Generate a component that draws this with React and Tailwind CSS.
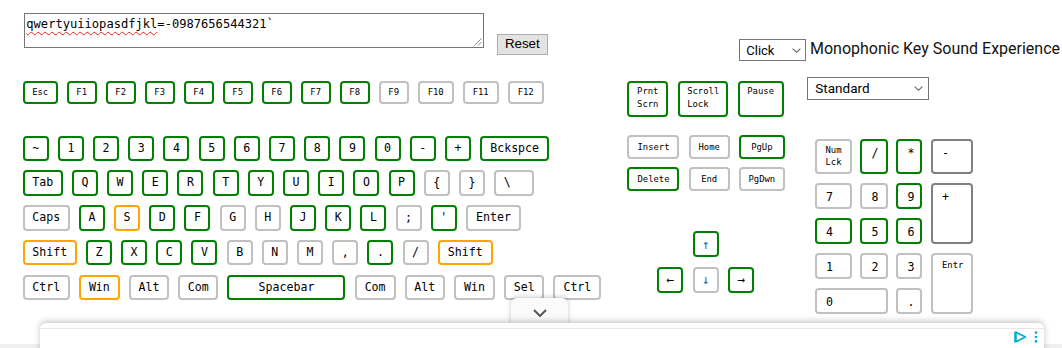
import React from 'react';

const G = 'border-[#008000]';
const O = 'border-[#ffa500]';
const L = 'border-[#c0c0c0]';
const D = 'border-[#808080]';

const fnRow = [
  ['Esc', G, 'w-[35px]'], ['F1', G], ['F2', G], ['F3', G], ['F4', G], ['F5', G], ['F6', G],
  ['F7', G], ['F8', G], ['F9', L], ['F10', L, 'w-[36px]'], ['F11', L, 'w-[36px]'], ['F12', L, 'w-[36px]'],
];

const mainRows = [
  [
    ['~', G], ['1', G], ['2', G], ['3', G], ['4', G], ['5', G], ['6', G], ['7', G], ['8', G],
    ['9', G], ['0', G], ['-', G], ['+', G], ['Bckspce', G, 'w-[69px]'],
  ],
  [
    ['Tab', G, 'w-[40px]'], ['Q', G], ['W', G], ['E', G], ['R', G], ['T', G], ['Y', G], ['U', G],
    ['I', G], ['O', G], ['P', G], ['{', L], ['}', L], ['\\', L, 'w-[40px]', 'justify-start pl-[7.5px]'],
  ],
  [
    ['Caps', L, 'w-[47px]'], ['A', G], ['S', O], ['D', G], ['F', G], ['G', L], ['H', L], ['J', G],
    ['K', G], ['L', G], [';', L], ["'", G], ['Enter', L, 'w-[55px]'],
  ],
  [
    ['Shift', O, 'w-[54px]'], ['Z', G], ['X', G], ['C', G], ['V', G], ['B', L], ['N', L], ['M', L],
    [',', L], ['.', G], ['/', L], ['Shift', O, 'w-[55px]'],
  ],
  [
    ['Ctrl', L, 'w-[47px]'], ['Win', O, 'w-[41px]'], ['Alt', L, 'w-[40px]'], ['Com', L, 'w-[40px]'],
    ['Spacebar', G, 'w-[118px]'], ['Com', L, 'w-[41px]'], ['Alt', L, 'w-[40px]'], ['Win', L, 'w-[41px]'],
    ['Sel', L, 'w-[40px]'], ['Ctrl', L, 'w-[48px]'],
  ],
];

function Key({ k, size = 'text-[11.6px]', def = 'w-[26px]' }) {
  const [t, c, w = def, align = 'justify-center'] = k;
  return (
    <div className={`flex shrink-0 items-center ${align} ${w} h-full border-2 ${c} rounded-[4px] bg-white text-black ${size} leading-none`}>
      {t}
    </div>
  );
}

function SmallKey({ children, c, w }) {
  return (
    <div className={`flex shrink-0 items-center justify-center ${w} h-[23.4px] border-2 ${c} rounded-[4px] bg-white text-black text-[8.9px] leading-none`}>
      {children}
    </div>
  );
}

function TallKey({ lines, c, w }) {
  return (
    <div className={`shrink-0 ${w} h-[35.4px] border-2 ${c} rounded-[4px] bg-white text-black text-[8.9px] leading-[12.7px] pl-[7.6px] pt-[2px]`}>
      {lines.map((l) => (
        <div key={l}>{l}</div>
      ))}
    </div>
  );
}

function ArrowKey({ children, c, tone = 'text-black' }) {
  return (
    <div className={`flex items-center justify-center w-[26px] h-[26px] border-2 ${c} rounded-[4px] bg-white ${tone} text-[13px] leading-none`}>
      {children}
    </div>
  );
}

function PadKey({ children, c, span = '', small = false }) {
  return (
    <div
      className={`${span} border-2 ${c} rounded-[4px] bg-white text-black pl-[9px] ${
        small ? 'text-[8.9px] pt-[5.5px]' : 'text-[11.6px] pt-[6.5px]'
      } leading-none`}
    >
      {children}
    </div>
  );
}

function Chevron() {
  return (
    <svg width="9" height="5" viewBox="0 0 9 5" className="shrink-0">
      <path d="M0.6 0.6 L4.5 4.2 L8.4 0.6" stroke="#6b6b6b" strokeWidth="1.1" fill="none" />
    </svg>
  );
}

export default function App() {
  return (
    <div className="relative w-[1062px] h-[348px] overflow-hidden bg-white font-['DejaVu_Sans_Mono',monospace]">
      {/* top controls */}
      <div className="flex items-start h-[77.3px]">
        <div className="relative ml-[24.3px] mt-[13.3px] w-[460px] h-[35px] border border-[#767676] bg-white pl-[1px] pt-[3px] text-[12.1px] leading-[15px] text-black">
          <span className="underline decoration-wavy decoration-[#e02424] decoration-[1px] underline-offset-[3px]">
            qwertyuiiopasdfjkl
          </span>
          =-0987656544321`
          <svg width="8" height="8" viewBox="0 0 8 8" className="absolute right-[1px] bottom-[1px]">
            <path d="M7.5 0.5 L0.5 7.5 M7.5 4 L4 7.5" stroke="#8a8a8a" strokeWidth="1" />
          </svg>
        </div>
        <div className="ml-[12.7px] mt-[34px] w-[50.7px] h-[20.7px] flex items-center justify-center border border-[#adadad] bg-[#e3e3e3] text-[13.33px] text-black font-['Liberation_Sans',Arial,sans-serif]">
          Reset
        </div>
        <div className="ml-[191.6px] mt-[37.3px] flex items-center font-['Roboto',sans-serif]">
          <div className="flex items-center justify-between w-[66.4px] h-[22.4px] border border-[#767676] bg-white pl-[6px] pr-[4px] text-[13px] text-black">
            <span>Click</span>
            <Chevron />
          </div>
          <div className="ml-[4.3px] mb-[2px] whitespace-nowrap text-[16px] text-[#111]">Monophonic Key Sound Experience</div>
        </div>
      </div>

      {/* keyboard */}
      <div className="flex items-start pl-[22.7px]">
        {/* main block */}
        <div className="w-[580px] shrink-0 pt-[4px]">
          <div className="flex gap-[9px] h-[23px]">
            {fnRow.map((k, i) => (
              <Key key={i} k={k} size="text-[8.9px]" def="w-[30px]" />
            ))}
          </div>
          <div className="mt-[31.4px] flex flex-col gap-[9.25px]">
            {mainRows.map((row, r) => (
              <div key={r} className="flex gap-[9.2px] h-[25.5px]">
                {row.map((k, i) => (
                  <Key key={i} k={k} />
                ))}
              </div>
            ))}
          </div>
        </div>

        {/* navigation block */}
        <div className="ml-[24.8px] w-[157px] shrink-0 pt-[4px]">
          <div className="flex gap-[9.5px]">
            <TallKey lines={['Prnt', 'Scrn']} c={G} w="w-[40.6px]" />
            <TallKey lines={['Scroll', 'Lock']} c={G} w="w-[50.6px]" />
            <TallKey lines={['Pause']} c={G} w="w-[46px]" />
          </div>
          <div className="mt-[18.6px] flex gap-[9.2px]">
            <SmallKey c={L} w="w-[52px]">Insert</SmallKey>
            <SmallKey c={L} w="w-[41px]">Home</SmallKey>
            <SmallKey c={G} w="w-[46px]">PgUp</SmallKey>
          </div>
          <div className="mt-[8.6px] flex gap-[9.2px]">
            <SmallKey c={G} w="w-[52px]">Delete</SmallKey>
            <SmallKey c={L} w="w-[41px]">End</SmallKey>
            <SmallKey c={L} w="w-[46px]">PgDwn</SmallKey>
          </div>
          <div className="mt-[40.6px] flex justify-center">
            <ArrowKey c={G} tone="text-[#2f6fbf]">↑</ArrowKey>
          </div>
          <div className="mt-[9.4px] flex justify-center gap-[9.5px]">
            <ArrowKey c={G}>←</ArrowKey>
            <ArrowKey c={L} tone="text-[#2f6fbf]">↓</ArrowKey>
            <ArrowKey c={G}>→</ArrowKey>
          </div>
        </div>

        {/* numpad block */}
        <div className="ml-[22.8px] shrink-0">
          <div className="flex items-center justify-between w-[121.4px] h-[22.4px] border border-[#767676] bg-white pl-[7px] pr-[5px] text-[13.5px] text-black font-['Roboto',sans-serif]">
            <span>Standard</span>
            <Chevron />
          </div>
          <div className="ml-[7.7px] mt-[39.6px] grid grid-cols-[37px_27.5px_26px_42px] grid-rows-[35px_26px_26px_26px_26px] gap-x-[8.5px] gap-y-[9px]">
            <div className={`flex flex-col items-center justify-center border-2 ${L} rounded-[4px] bg-white text-black text-[8.9px] leading-[11.6px]`}>
              <span>Num</span>
              <span>Lck</span>
            </div>
            <PadKey c={G}>/</PadKey>
            <PadKey c={G}>*</PadKey>
            <PadKey c={D}>-</PadKey>
            <PadKey c={L}>7</PadKey>
            <PadKey c={L}>8</PadKey>
            <PadKey c={G}>9</PadKey>
            <PadKey c={D} span="row-span-2">+</PadKey>
            <PadKey c={G}>4</PadKey>
            <PadKey c={G}>5</PadKey>
            <PadKey c={G}>6</PadKey>
            <PadKey c={L}>1</PadKey>
            <PadKey c={L}>2</PadKey>
            <PadKey c={L}>3</PadKey>
            <PadKey c={L} span="row-span-2" small>Entr</PadKey>
            <PadKey c={L} span="col-span-2">0</PadKey>
            <PadKey c={L}>.</PadKey>
          </div>
        </div>
      </div>

      {/* anchored ad overlay */}
      <div className="absolute left-0 right-0 bottom-0 h-[4px] bg-[#efefef]" />
      <div className="absolute left-[511px] top-[298px] w-[57px] h-[30px] rounded-t-[6px] bg-[#fafafa] shadow-[0_-1px_5px_rgba(0,0,0,0.22)] flex justify-center pt-[11px]">
        <svg width="14" height="8" viewBox="0 0 14 8">
          <path d="M1 1 L7 7 L13 1" stroke="#555" strokeWidth="2" fill="none" />
        </svg>
      </div>
      <div className="absolute left-[40px] top-[323px] w-[1004px] h-[30px] rounded-t-[6px] bg-white shadow-[0_-2px_6px_rgba(0,0,0,0.22)]">
        <div className="mt-[5px] border-t border-[#e6e6e6] flex justify-end items-start gap-[7px] pr-[6px] pt-[2px]">
          <svg width="13" height="12" viewBox="0 0 13 12">
            <path d="M1.5 1 L1.5 11 L11.5 6 Z" stroke="#00aecd" strokeWidth="1.6" fill="none" strokeLinejoin="round" />
            <path d="M1.5 1 L1.5 11" stroke="#00aecd" strokeWidth="2.4" />
          </svg>
          <svg width="4" height="12" viewBox="0 0 4 12">
            <circle cx="2" cy="1.6" r="1.3" fill="#00aecd" />
            <circle cx="2" cy="6" r="1.3" fill="#00aecd" />
            <circle cx="2" cy="10.4" r="1.3" fill="#00aecd" />
          </svg>
        </div>
      </div>
    </div>
  );
}
